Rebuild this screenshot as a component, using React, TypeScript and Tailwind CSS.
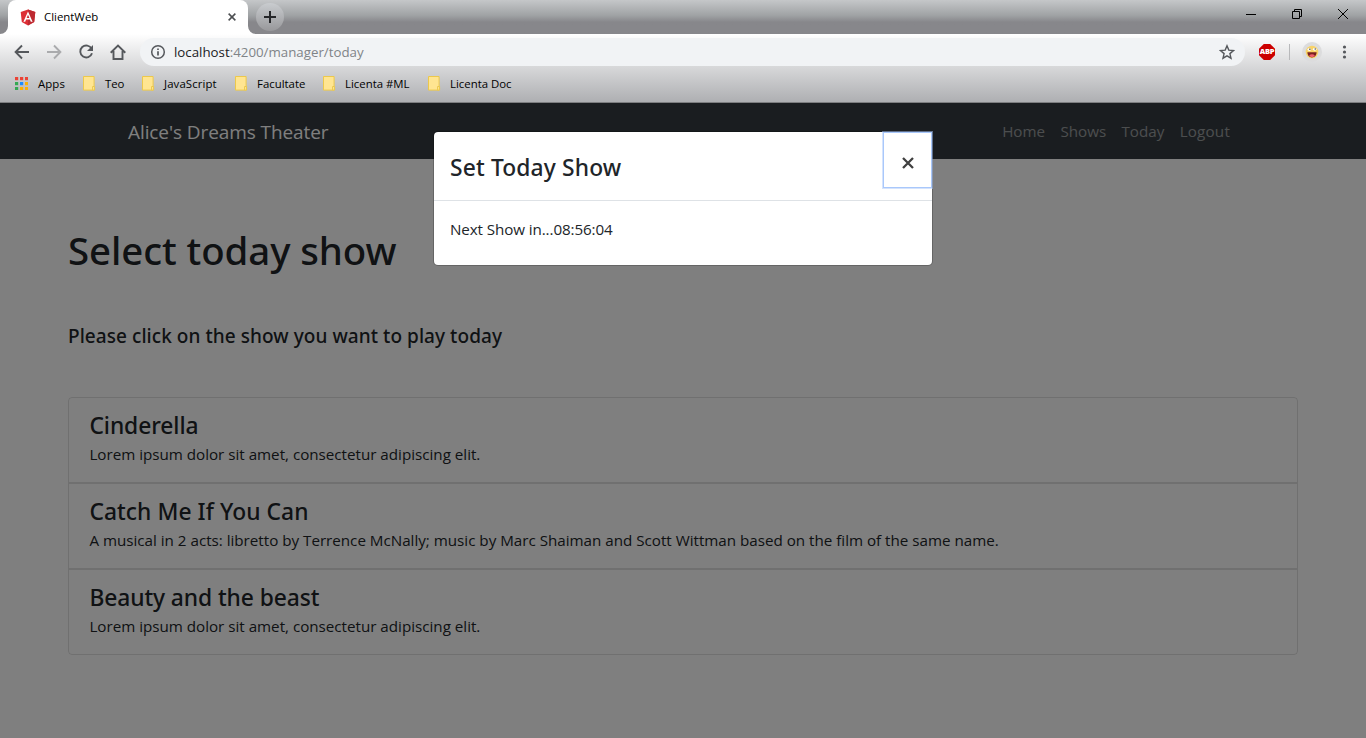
import type { ReactNode } from 'react';

const bookmarks: { label: string; width: string; text: string }[] = [
  { label: 'Teo', width: 'w-[59px]', text: 'tracking-[-0.1px]' },
  { label: 'JavaScript', width: 'w-[93px]', text: 'tracking-[0.1px]' },
  { label: 'Facultate', width: 'w-[88px]', text: '' },
  { label: 'Licenta #ML', width: 'w-[105px]', text: '' },
  { label: 'Licenta Doc', width: 'w-[105px]', text: '' },
];

const shows = [
  {
    title: 'Cinderella',
    text: 'Lorem ipsum dolor sit amet, consectetur adipiscing elit.',
    titleStyle: 'tracking-[-0.07px]',
  },
  {
    title: 'Catch Me If You Can',
    text: 'A musical in 2 acts: libretto by Terrence McNally; music by Marc Shaiman and Scott Wittman based on the film of the same name.',
    titleStyle: 'tracking-[0.07px]',
  },
  {
    title: 'Beauty and the beast',
    text: 'Lorem ipsum dolor sit amet, consectetur adipiscing elit.',
    titleStyle: 'tracking-[-0.08px]',
  },
];

const appColors = ['#ea4335', '#ea4335', '#ea4335', '#34a853', '#1a8cff', '#fbb004', '#34a853', '#fbb004', '#fbb004'];

function AngularLogo() {
  return (
    <svg width="16" height="17" viewBox="0 0 16 17">
      <path d="M8 .5 15.3 3.1 14.2 13 8 16.5 1.8 13 .7 3.1Z" fill="#dd2f35" />
      <path d="M8 .5 15.3 3.1 14.2 13 8 16.5Z" fill="#bd2a31" />
      <path d="M8 2.4 3.4 12.8h1.8l.9-2.4h3.8l.9 2.4h1.8ZM8 5.7l1.4 3.3H6.6Z" fill="#fff" fillRule="evenodd" />
    </svg>
  );
}

function ToolIcon({ children, faded = false }: { children: ReactNode; faded?: boolean }) {
  return (
    <svg
      width="16"
      height="16"
      viewBox="0 0 16 16"
      fill="none"
      strokeWidth="1.9"
      stroke={faded ? '#aaabad' : '#55585c'}
    >
      {children}
    </svg>
  );
}

function FolderIcon() {
  return (
    <svg width="13" height="15" viewBox="0 0 13 15">
      <path d="M.5.5h10.6v13.6H.5Z" fill="#ffe591" stroke="#ecc84c" />
      <path d="M9.6 10.5h2v3.6h-2Z" fill="#ffe591" stroke="#ecc84c" />
    </svg>
  );
}

function TabStrip() {
  return (
    <div className="flex h-[34px] bg-linear-to-b from-[#c5c7c9] via-[#a0a3a5] via-45% to-[#87878b] to-65% pl-2">
      <div className="relative flex h-full w-60 items-center rounded-t-lg bg-white pl-3">
        <svg className="absolute bottom-0 -left-2" width="8" height="8">
          <path d="M8 0v8H0a8 8 0 0 0 8-8Z" fill="#fff" />
        </svg>
        <svg className="absolute -right-2 bottom-0" width="8" height="8">
          <path d="M0 0v8h8a8 8 0 0 1-8-8Z" fill="#fff" />
        </svg>
        <AngularLogo />
        <span className="ml-2 grow text-[11.4px] text-black">ClientWeb</span>
        <svg className="mr-3 mb-px" width="8" height="8" viewBox="0 0 9 9" stroke="#4c4e51" strokeWidth="1.7">
          <path d="m.7.7 7.6 7.6M8.3.7.7 8.3" />
        </svg>
      </div>
      <div className="mt-[3px] ml-2 flex size-7 items-center justify-center rounded-full bg-linear-to-b from-[#c9cccf] to-[#98989b]">
        <svg width="12" height="12" stroke="#26272a" strokeWidth="2">
          <path d="M6 0v12M0 6h12" />
        </svg>
      </div>
      <div className="grow" />
      <svg className="mt-2 mr-[17px]" width="103" height="12" fill="none" stroke="#000">
        <path d="M0 6.500h10M46.500 3.500h7v7h-7ZM48.500 3.500v-2h7v7h-2" />
        <path d="m92 1 10 10M102 1 92 11" />
      </svg>
    </div>
  );
}

function Toolbar() {
  return (
    <div className="flex h-9 items-center pl-3.5">
      <div className="flex gap-4">
        <ToolIcon>
          <path d="M15 8H2M8 1.500 1.600 8 8 14.500" />
        </ToolIcon>
        <ToolIcon faded>
          <path d="M1 8h13M8 1.500 14.400 8 8 14.500" />
        </ToolIcon>
        <ToolIcon>
          <path d="M13.600 4.700A6 6 0 1 0 14 9.300" />
          <path d="M15 1v6H9Z" fill="#55585c" stroke="none" />
        </ToolIcon>
        <ToolIcon>
          <path d="M.7 8.700 8 1.600l7.300 7.100M3.500 7v8h9V7" />
        </ToolIcon>
      </div>
      <div className="ml-3.5 flex h-7 w-[1105px] items-center rounded-full bg-[#f1f3f5] pr-2.5 pl-2.5">
        <svg width="16" height="16" viewBox="0 0 16 16" fill="none" stroke="#55585c">
          <circle cx="8" cy="8" r="6.300" strokeWidth="1.500" />
          <path d="M8 7.200v4.300M8 4.400v1.700" strokeWidth="1.700" />
        </svg>
        <span className="mt-0.5 ml-2 grow text-[13.3px] text-[#808488]">
          <span className="text-[#202124]">localhost</span>:4200/manager/today
        </span>
        <svg width="16" height="16" viewBox="0 0 16 16" fill="none" stroke="#55585c" strokeWidth="1.400">
          <path d="m8 1.800 1.800 4.300 4.700.4-3.600 3.100 1.100 4.600L8 11.800l-4 2.400 1.100-4.600-3.600-3.100 4.700-.4Z" />
        </svg>
      </div>
      <div className="ml-3.5 flex items-center">
        <div className="flex size-4 items-center justify-center bg-[#cc0000] font-['Open_Sans',sans-serif] text-[7.500px] font-extrabold tracking-[-0.2px] text-white [clip-path:polygon(30%_0,70%_0,100%_30%,100%_70%,70%_100%,30%_100%,0_70%,0_30%)]">
          ABP
        </div>
        <div className="ml-3.5 h-4 w-px bg-[#b8b9bb]" />
        <div className="ml-3 flex size-5 items-center justify-center rounded-full bg-[#dcdcdd]">
          <svg width="14" height="14" viewBox="0 0 14 14">
            <circle cx="7" cy="7" r="6.300" fill="#f8d368" />
            <ellipse cx="4.300" cy="4.600" rx="1.800" ry="1.400" fill="#fff" />
            <ellipse cx="9.700" cy="4.300" rx="1.800" ry="1.400" fill="#fff" />
            <circle cx="4.900" cy="4.300" r=".7" fill="#333" />
            <circle cx="10.200" cy="4" r=".7" fill="#333" />
            <path d="M2.400 7.300h9.200c0 3-1.900 5.200-4.600 5.200s-4.600-2.200-4.600-5.200Z" fill="#7a2020" />
            <path d="M4.200 10.500c1.500-1.600 4.100-1.600 5.600 0-1.400 2.100-4.200 2.100-5.600 0Z" fill="#f0606c" />
          </svg>
        </div>
        <svg className="ml-5" width="5" height="14" fill="#55585c">
          <circle cx="2.500" cy="2" r="1.600" />
          <circle cx="2.500" cy="7" r="1.600" />
          <circle cx="2.500" cy="12" r="1.600" />
        </svg>
      </div>
    </div>
  );
}

function BookmarksBar() {
  return (
    <div className="flex h-8 items-center border-b border-[#7d7e80] pb-[5px] pl-[15px] text-[11.4px] text-black">
      <div className="flex w-[68px] items-center">
        <svg width="13" height="13" viewBox="0 0 13 13">
          {appColors.map((color, i) => (
            <rect key={i} x={(i % 3) * 5} y={Math.floor(i / 3) * 5} width="3.200" height="3.200" fill={color} />
          ))}
        </svg>
        <span className="-mt-px ml-2.5 tracking-[0.1px]">Apps</span>
      </div>
      {bookmarks.map(({ label, width, text }) => (
        <div key={label} className={`flex items-center whitespace-nowrap ${width}`}>
          <FolderIcon />
          <span className={`-mt-px ml-[9px] ${text}`}>{label}</span>
        </div>
      ))}
    </div>
  );
}

function Page() {
  return (
    <div className="h-[635px] bg-white text-[#212529]">
      <nav className="flex h-14 items-center bg-[#343a40] pr-[136px] pl-32 text-[15.2px] text-white/50">
        <span className="mt-0.5 grow text-[19px] tracking-[-0.09px] text-white">Alice's Dreams Theater</span>
        <div className="flex gap-[15.300px]">
          <span>Home</span>
          <span>Shows</span>
          <span>Today</span>
          <span className="tracking-[0.2px]">Logout</span>
        </div>
      </nav>
      <main className="px-[68px] pt-[67px]">
        <h1 className="font-['Noto_Sans',sans-serif] text-[38.4px] leading-12 font-medium tracking-[-0.080px]">
          Select today show
        </h1>
        <h5 className="mt-[50px] font-['Noto_Sans',sans-serif] text-[19px] leading-6 font-medium tracking-[0.06px]">
          Please click on the show you want to play today
        </h5>
        <div className="mt-[49px]">
          {shows.map(({ title, text, titleStyle }) => (
            <div
              key={title}
              className="h-[86px] border border-black/12 px-[20.400px] pt-[13px] first:rounded-t last:rounded-b"
            >
              <h4 className={`font-['Noto_Sans',sans-serif] text-[22.8px] leading-[30px] font-medium ${titleStyle}`}>
                {title}
              </h4>
              <p className="mt-px text-[15.2px] leading-6 tracking-[-0.010px]">{text}</p>
            </div>
          ))}
        </div>
      </main>
    </div>
  );
}

function Modal() {
  return (
    <div className="absolute inset-0 flex items-start justify-center bg-black/50 pt-7">
      <div className="w-[500px] rounded-[5px] border border-black/20 bg-white bg-clip-padding text-[#212529]">
        <div className="flex h-[69px] justify-between border-b border-[#dee2e6] pl-4">
          <h4 className="pt-[18px] font-['Noto_Sans',sans-serif] text-[22.8px] leading-9 font-medium tracking-[0.15px]">
            Set Today Show
          </h4>
          <button className="flex h-14 w-[49px] items-center justify-center border border-[#a9c8fb] pt-1.5 outline outline-[#a9c8fb]/50">
            <svg width="12" height="12" stroke="#404040" strokeWidth="2.300">
              <path d="m1 1 10 10M11 1 1 11" />
            </svg>
          </button>
        </div>
        <p className="h-16 px-4 pt-4 text-[15.2px] leading-6 tracking-[-0.100px]">Next Show in...08:56:04</p>
      </div>
    </div>
  );
}

export default function App() {
  return (
    <div className="h-[738px] w-[1366px] overflow-hidden font-['Open_Sans','Noto_Sans',sans-serif]">
      <TabStrip />
      <header className="h-[69px] bg-linear-to-b from-white to-[#adaeb1]">
        <Toolbar />
        <div className="h-px" />
        <BookmarksBar />
      </header>
      <div className="relative">
        <Page />
        <Modal />
      </div>
    </div>
  );
}
